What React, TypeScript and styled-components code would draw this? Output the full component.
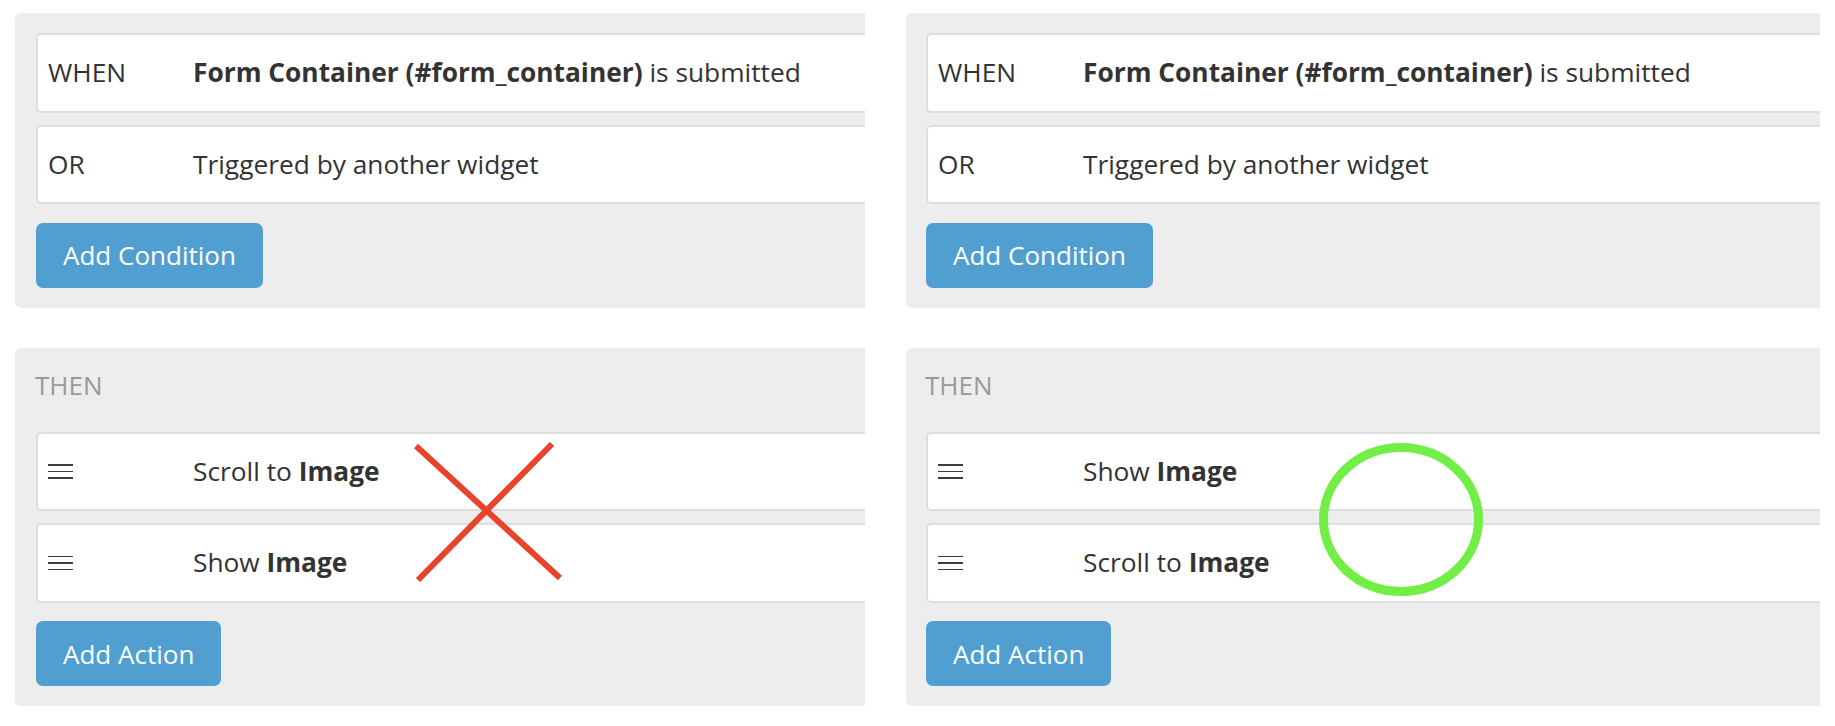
import React from "react";
import styled, { createGlobalStyle } from "styled-components";

const GlobalStyle = createGlobalStyle`
  body {
    margin: 0;
    background: #ffffff;
    font-family: "Open Sans", "Noto Sans", sans-serif;
    color: #333333;
  }
`;

const Page = styled.div`
  display: flex;
  gap: 41px;
  padding: 13px 0 0 15px;
  width: 1835px;
  height: 726px;
  box-sizing: border-box;
  overflow: hidden;
`;

const Column = styled.div<{ width: number }>`
  position: relative;
  display: flex;
  flex-direction: column;
  gap: 40px;
  width: ${(props) => props.width}px;
  flex-shrink: 0;
`;

const Panel = styled.div<{ padLeft: number }>`
  display: flex;
  flex-direction: column;
  align-items: flex-start;
  background: #ededed;
  border-radius: 6px 0 0 6px;
  padding: 20px 0 20px ${(props) => props.padLeft}px;
  overflow: hidden;
`;

const SectionLabel = styled.div`
  font-size: 26px;
  line-height: 35px;
  color: #999999;
  margin-left: -1px;
  margin-bottom: 29px;
`;

const RowList = styled.div`
  display: flex;
  flex-direction: column;
  gap: 12px;
  width: 100%;
`;

const Row = styled.div`
  display: grid;
  grid-template-columns: 145px 1fr;
  align-items: center;
  height: 79.5px;
  box-sizing: border-box;
  padding-left: 10px;
  background: #ffffff;
  border: 2px solid #dedede;
  border-right: none;
  border-radius: 5px 0 0 5px;
  font-size: 26.3px;
  line-height: 35px;
  color: #333333;
  white-space: nowrap;
`;

const Strong = styled.b`
  font-weight: 700;
`;

const Handle = styled.div`
  display: flex;
  flex-direction: column;
  gap: 5px;
  width: 25px;
  span {
    display: block;
    height: 1.5px;
    background: #3d3d3d;
  }
`;

const AddButton = styled.button`
  margin-top: 18.5px;
  height: 65px;
  padding: 0 27px;
  border: none;
  border-radius: 7px;
  background: #509fd0;
  color: #ffffff;
  font-family: "Open Sans", "Noto Sans", sans-serif;
  font-size: 26px;
  cursor: pointer;
`;

const Mark = styled.svg<{ left: number; top: number }>`
  position: absolute;
  left: ${(props) => props.left}px;
  top: ${(props) => props.top}px;
  pointer-events: none;
`;

function DragHandle() {
  return (
    <Handle>
      <span />
      <span />
      <span />
    </Handle>
  );
}

function ConditionPanel({ padLeft }: { padLeft: number }) {
  return (
    <Panel padLeft={padLeft}>
      <RowList>
        <Row>
          <span>WHEN</span>
          <span>
            <Strong>Form Container (#form_container)</Strong> is submitted
          </span>
        </Row>
        <Row>
          <span>OR</span>
          <span>Triggered by another widget</span>
        </Row>
      </RowList>
      <AddButton>Add Condition</AddButton>
    </Panel>
  );
}

function ActionPanel({
  padLeft,
  actions,
}: {
  padLeft: number;
  actions: { verb: string; target: string }[];
}) {
  return (
    <Panel padLeft={padLeft}>
      <SectionLabel>THEN</SectionLabel>
      <RowList>
        {actions.map((a, idx) => (
          <Row key={idx}>
            <DragHandle />
            <span>
              {a.verb} <Strong>{a.target}</Strong>
            </span>
          </Row>
        ))}
      </RowList>
      <AddButton>Add Action</AddButton>
    </Panel>
  );
}

export default function App() {
  return (
    <>
      <GlobalStyle />
      <Page>
        <Column width={850}>
          <ConditionPanel padLeft={21} />
          <ActionPanel
            padLeft={21}
            actions={[
              { verb: "Scroll to", target: "Image" },
              { verb: "Show", target: "Image" },
            ]}
          />
          {/* wrong order */}
          <Mark left={399} top={429} width={148} height={140} viewBox="0 0 148 140">
            <line x1="2" y1="4" x2="146" y2="136" stroke="#e8432b" strokeWidth="6" />
            <line x1="138" y1="2" x2="4" y2="138" stroke="#e8432b" strokeWidth="6" />
          </Mark>
        </Column>
        <Column width={914}>
          <ConditionPanel padLeft={20} />
          <ActionPanel
            padLeft={20}
            actions={[
              { verb: "Show", target: "Image" },
              { verb: "Scroll to", target: "Image" },
            ]}
          />
          {/* right order */}
          <Mark left={413} top={430} width={164} height={153} viewBox="0 0 164 153">
            <ellipse cx="82" cy="76.5" rx="77.5" ry="72" fill="none" stroke="#72ee46" strokeWidth="9" />
          </Mark>
        </Column>
      </Page>
    </>
  );
}
